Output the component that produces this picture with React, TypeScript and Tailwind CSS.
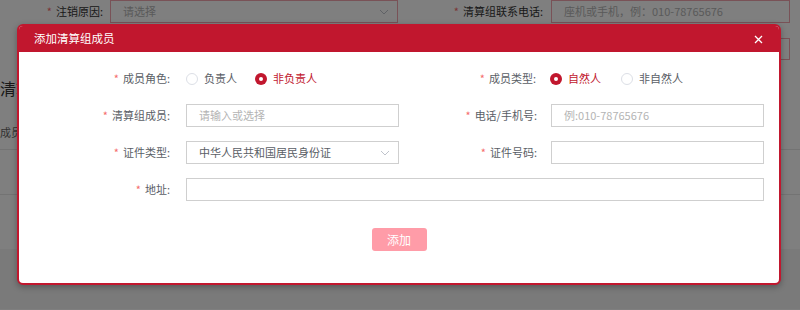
import React from 'react';

const font = { fontFamily: '"Noto Sans CJK SC", "Noto Sans", sans-serif' };

const Star = () => <span className="text-[#f56c6c] mr-[4px]">*</span>;

const Chevron = () => (
  <svg width="10" height="6" viewBox="0 0 10 6" className="text-[#c0c4cc]">
    <path d="M1 1l4 4 4-4" fill="none" stroke="currentColor" strokeWidth="1" />
  </svg>
);

const Radio = ({ label, checked }: { label: string; checked?: boolean }) => (
  <div className="flex items-center">
    {checked ? (
      <span className="w-[12px] h-[12px] rounded-full bg-[#c1172e] flex items-center justify-center">
        <span className="w-[4px] h-[4px] rounded-full bg-white" />
      </span>
    ) : (
      <span className="w-[12px] h-[12px] rounded-full border border-[#dcdfe6] bg-white" />
    )}
    <span className={`ml-[6px] ${checked ? 'text-[#c1172e]' : 'text-[#5a5e66]'}`}>{label}</span>
  </div>
);

const Label = ({ text, w, pr }: { text: string; w: string; pr: string }) => (
  <div className={`${w} ${pr} shrink-0 text-right text-[#5a5e66]`}>
    <Star />
    {text}
  </div>
);

const Input = ({ w, placeholder, value, select }: { w: string; placeholder?: string; value?: string; select?: boolean }) => (
  <div className={`${w} h-[23px] border border-[#cfcfcf] bg-white flex items-center justify-between pl-[12px] pr-[8px]`}>
    <span className={value ? 'text-[#5a5e66]' : 'text-[#b4b4b4]'}>{value || placeholder}</span>
    {select && <Chevron />}
  </div>
);

const App: React.FC = () => {
  return (
    <div className="relative w-[800px] h-[310px] overflow-hidden bg-white text-[11px]" style={font}>
      {/* page behind the dialog */}
      <div className="flex items-center h-[23px]">
        <div className="w-[110px] pr-[7px] text-right text-[#333]">
          <span className="text-[#f56c6c] mr-[4px]">*</span>注销原因:
        </div>
        <div className="w-[288px] h-[23px] border border-[#f3a4ae] flex items-center justify-between pl-[12px] pr-[8px]">
          <span className="text-[#b4b4b4]">请选择</span>
          <Chevron />
        </div>
        <div className="w-[153px] pr-[8px] text-right text-[#333]">
          <span className="text-[#f56c6c] mr-[4px]">*</span>清算组联系电话:
        </div>
        <div className="w-[239px] h-[23px] border border-[#f3a4ae] flex items-center pl-[12px]">
          <span className="text-[#b4b4b4]">座机或手机，例：010-78765676</span>
        </div>
      </div>
      <div className="flex h-[37px] pt-[15px]">
        <div className="ml-[551px] w-[239px] h-[22px] border border-[#f3a4ae]" />
      </div>
      <div className="mt-[17px] text-[16px] text-[#333] leading-[22px]">清算组成员</div>
      <div className="mt-[23px] text-[#666] leading-[20px]">成员姓名</div>
      <div className="mt-[7px] border-t border-[#e6e6e6]" />
      <div className="h-[45px] border-b border-[#e6e6e6]" />
      <div className="mt-[54px] h-[60px] bg-[#f5f5f5]" />

      {/* mask */}
      <div className="absolute inset-0 bg-black/50" />

      {/* dialog */}
      <div className="absolute left-[17px] top-[24px] w-[764px] h-[261px] bg-white border-2 border-[#c1172e] rounded-[6px] overflow-hidden shadow-[0_2px_6px_rgba(0,0,0,0.3)] flex flex-col">
        <div className="h-[26px] bg-[#c1172e] flex items-center justify-between pl-[15px] pr-[16px] shrink-0">
          <span className="text-white text-[11.5px]">添加清算组成员</span>
          <svg width="9" height="9" viewBox="0 0 9 9">
            <path d="M1 1l7 7M8 1l-7 7" stroke="white" strokeWidth="1.3" />
          </svg>
        </div>
        <div className="flex flex-col gap-[14px] pt-[15px]">
          <div className="flex items-center h-[23px]">
            <Label text="成员角色:" w="w-[167px]" pr="pr-[16px]" />
            <div className="w-[213px] flex items-center gap-[18px]">
              <Radio label="负责人" />
              <Radio label="非负责人" checked />
            </div>
            <Label text="成员类型:" w="w-[151px]" pr="pr-[14px]" />
            <div className="flex items-center gap-[20px]">
              <Radio label="自然人" checked />
              <Radio label="非自然人" />
            </div>
          </div>
          <div className="flex items-center h-[23px]">
            <Label text="清算组成员:" w="w-[167px]" pr="pr-[16px]" />
            <Input w="w-[213px]" placeholder="请输入或选择" />
            <Label text="电话/手机号:" w="w-[152px]" pr="pr-[14px]" />
            <Input w="w-[213px]" placeholder="例:010-78765676" />
          </div>
          <div className="flex items-center h-[23px]">
            <Label text="证件类型:" w="w-[167px]" pr="pr-[16px]" />
            <Input w="w-[213px]" value="中华人民共和国居民身份证" select />
            <Label text="证件号码:" w="w-[152px]" pr="pr-[14px]" />
            <Input w="w-[213px]" />
          </div>
          <div className="flex items-center h-[23px]">
            <Label text="地址:" w="w-[167px]" pr="pr-[16px]" />
            <Input w="w-[578px]" />
          </div>
        </div>
        <div className="flex justify-center mt-[27px]">
          <button className="w-[55px] h-[23px] rounded-[3px] bg-[#ff9ca8] text-white text-[12px]">添加</button>
        </div>
      </div>
    </div>
  );
};

export default App;
